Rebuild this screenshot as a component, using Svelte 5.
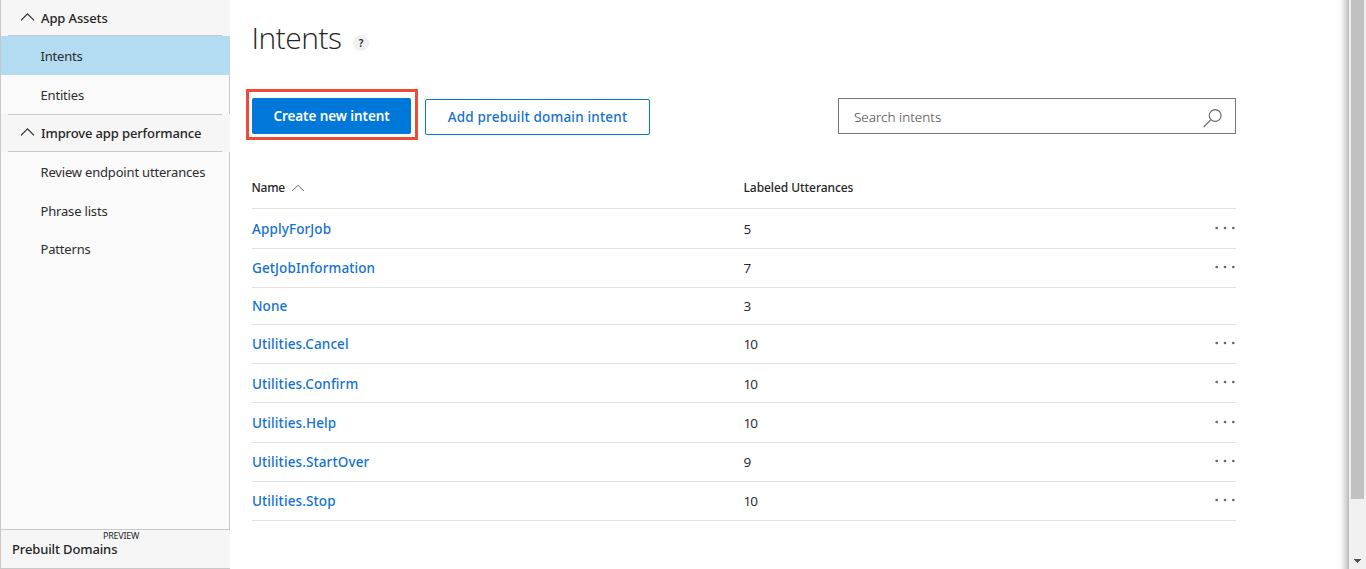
<script>
  const groups = [
    { title: 'App Assets', items: ['Intents', 'Entities'] },
    { title: 'Improve app performance', items: ['Review endpoint utterances', 'Phrase lists', 'Patterns'] }
  ];
  const intents = [
    { name: 'ApplyForJob', count: 5, height: 40 },
    { name: 'GetJobInformation', count: 7, height: 39 },
    { name: 'None', count: 3, height: 37, fixed: true },
    { name: 'Utilities.Cancel', count: 10, height: 39 },
    { name: 'Utilities.Confirm', count: 10, height: 39, low: true },
    { name: 'Utilities.Help', count: 10, height: 40 },
    { name: 'Utilities.StartOver', count: 9, height: 39 },
    { name: 'Utilities.Stop', count: 10, height: 39 }
  ];
  let selected = $state('Intents');
</script>

<div class="app">
  <nav class="sidebar">
    {#each groups as group}
      <div class="group-title">
        <svg class="chevron" width="16" height="10" viewBox="0 0 16 10"><path d="M1 8.4 7.5 1.9l6.5 6.5" /></svg>
        <span>{group.title}</span>
      </div>
      <div class="items">
        {#each group.items as item}
          <button class="item" class:selected={item === selected} onclick={() => (selected = item)}>{item}</button>
        {/each}
      </div>
    {/each}
    <div class="footer">
      <span class="domains">Prebuilt Domains</span>
      <span class="preview">PREVIEW</span>
    </div>
  </nav>

  <main>
    <header>
      <h1>Intents</h1>
      <span class="help">?</span>
    </header>

    <div class="toolbar">
      <div class="highlight"><button class="primary">Create new intent</button></div>
      <button class="secondary">Add prebuilt domain intent</button>
      <div class="search">
        <span>Search intents</span>
        <svg width="20" height="20" viewBox="0 0 20 20"><circle cx="12.2" cy="7.5" r="5.9" /><path d="M8 11.7 0.7 19" /></svg>
      </div>
    </div>

    <div class="table">
      <div class="row head">
        <span class="name">Name <svg width="14" height="8" viewBox="0 0 14 8"><path d="M1.2 7 7 1.2 12.8 7" /></svg></span>
        <span class="label">Labeled Utterances</span>
      </div>
      {#each intents as intent}
        <div class="row" class:low={intent.low} style="height: {intent.height}px">
          <span class="link">{intent.name}</span>
          <span class="count">{intent.count}</span>
          {#if !intent.fixed}
            <svg class="more" width="22" height="4" viewBox="0 0 22 4"><circle cx="2.7" cy="2" r="1.35" /><circle cx="11" cy="2" r="1.35" /><circle cx="19.3" cy="2" r="1.35" /></svg>
          {/if}
        </div>
      {/each}
    </div>
  </main>

  <div class="shade"></div>
  <div class="scrollbar">
    <div class="thumb"></div>
    <svg width="7" height="4" viewBox="0 0 7 4" shape-rendering="crispEdges"><path d="M0 0h7v1H6v1H5v1H4v1H3V3H2V2H1V1H0z" /></svg>
  </div>
</div>

<style>
  :global(body) { background: #fff; overflow: hidden; }
  * { box-sizing: border-box; }
  button { font: inherit; margin: 0; padding: 0; border: 0; background: none; text-align: left; }
  .app { display: flex; width: 1366px; height: 569px; overflow: hidden; font-family: 'Noto Sans', 'Open Sans', sans-serif; color: #252525; }
  svg { flex: none; }

  .sidebar { width: 230px; display: flex; flex-direction: column; background: #fafafa; border-left: 1px solid #c8c8c8; font-size: 13px; white-space: nowrap; }
  .group-title { height: 36px; display: flex; align-items: center; gap: 5px; padding-left: 19px; background: linear-gradient(#c8c8c8, #c8c8c8) 7px 100% / 214px 1px no-repeat #f6f6f6; font-weight: 500; letter-spacing: -0.13px; }
  .items + .group-title { height: 38px; background-image: linear-gradient(#c8c8c8, #c8c8c8), linear-gradient(#c8c8c8, #c8c8c8); background-position: 7px 0, 7px 100%; background-size: 214px 1px; background-repeat: no-repeat; }
  .chevron { margin-top: -2px; }
  .chevron path { fill: none; stroke: #333; stroke-width: 1.3; }
  .item { display: flex; align-items: center; width: 100%; height: 39px; padding: 0 0 0 39.5px; border-right: 1px solid #c8c8c8; letter-spacing: -0.18px; color: #2d2d2d; }
  .item.selected { background: #b3dbf2; border-color: #b3dbf2; }
  .items { display: flex; flex-direction: column; }
  .items:nth-of-type(4) { flex: 1; border-right: 1px solid #c8c8c8; }
  .items:nth-of-type(4) .item { border-right: 0; }
  .items:nth-of-type(4) .item:last-child { height: 37px; }
  .footer { height: 40px; display: flex; align-items: flex-start; background: #f6f6f6; border-top: 1px solid #c8c8c8; border-bottom: 1px solid #c8c8c8; }
  .domains { width: 91px; padding: 10px 0 0 11px; font-size: 13px; line-height: 18px; font-weight: 500; letter-spacing: -0.13px; }
  .preview { padding: 1px 0 0 11px; font-size: 9px; line-height: 10px; letter-spacing: -0.25px; }

  main { width: 1107px; padding-left: 22px; }
  header { display: flex; height: 89px; padding-top: 17px; }
  h1 { width: 101.5px; margin: 0 0 0 -0.5px; font: 300 30px/42px 'Open Sans', sans-serif; letter-spacing: -0.5px; color: #252525; }
  .help { width: 16px; height: 16px; margin-top: 18px; border-radius: 50%; background: #f0f0f0; font-size: 10px; line-height: 16px; font-weight: 600; text-align: center; }

  .toolbar { display: flex; align-items: flex-start; width: 984px; height: 78px; font-size: 13.5px; }
  .highlight { width: 172px; height: 51px; margin-left: -6px; padding: 6px 4px 3px 3px; border: 3px solid #ef4938; }
  .primary { width: 159px; height: 36px; border-radius: 2px; background: #0078d9; color: #fff; font-weight: 600; text-align: center; letter-spacing: -0.09px; }
  .secondary { width: 225px; height: 36px; margin: 10px 0 0 7px; border: 1px solid #0078d9; border-radius: 2px; color: #1371cf; font-weight: 500; text-align: center; letter-spacing: 0.18px; }
  .search { display: flex; align-items: center; justify-content: space-between; width: 398px; height: 36px; margin: 9px 0 0 auto; padding: 2px 12px 0 15px; border: 1px solid #767676; color: #444; font-weight: 300; }
  .search svg { margin-top: 2px; }
  .search circle, .search path { fill: none; stroke: #666; stroke-width: 1.15; }

  .table { width: 984px; }
  .row { display: flex; align-items: center; border-bottom: 1px solid #e3e3e3; font-size: 13.5px; }
  .head { height: 42px; font-size: 12px; font-weight: 500; }
  .name, .link { width: 491.5px; }
  .name { margin-left: -0.5px; width: 492px; letter-spacing: -0.25px; }
  .name svg { margin-left: 3px; }
  .name path { fill: none; stroke: #666; }
  .label { letter-spacing: -0.07px; }
  .link { color: #1371cf; font-weight: 500; letter-spacing: 0.11px; }
  .count { font-family: 'Open Sans', sans-serif; font-weight: 400; letter-spacing: -1px; }
  .low .link, .low .count { padding-top: 2px; }
  .more { margin: -2px 0 0 auto; }
  .more circle { fill: #65656e; }

  .shade { width: 12px; background: linear-gradient(90deg, #fff 0%, #f7f7f7 35%, #d5d5d5 75%, #b9b9b9 100%); }
  .scrollbar { width: 17px; display: flex; flex-direction: column; justify-content: space-between; background: #f0f0f0; padding: 0 2px 6px; align-items: center; }
  .thumb { width: 13px; height: 499px; background: #c1c1c1; }
  .scrollbar path { fill: #505050; }
</style>
